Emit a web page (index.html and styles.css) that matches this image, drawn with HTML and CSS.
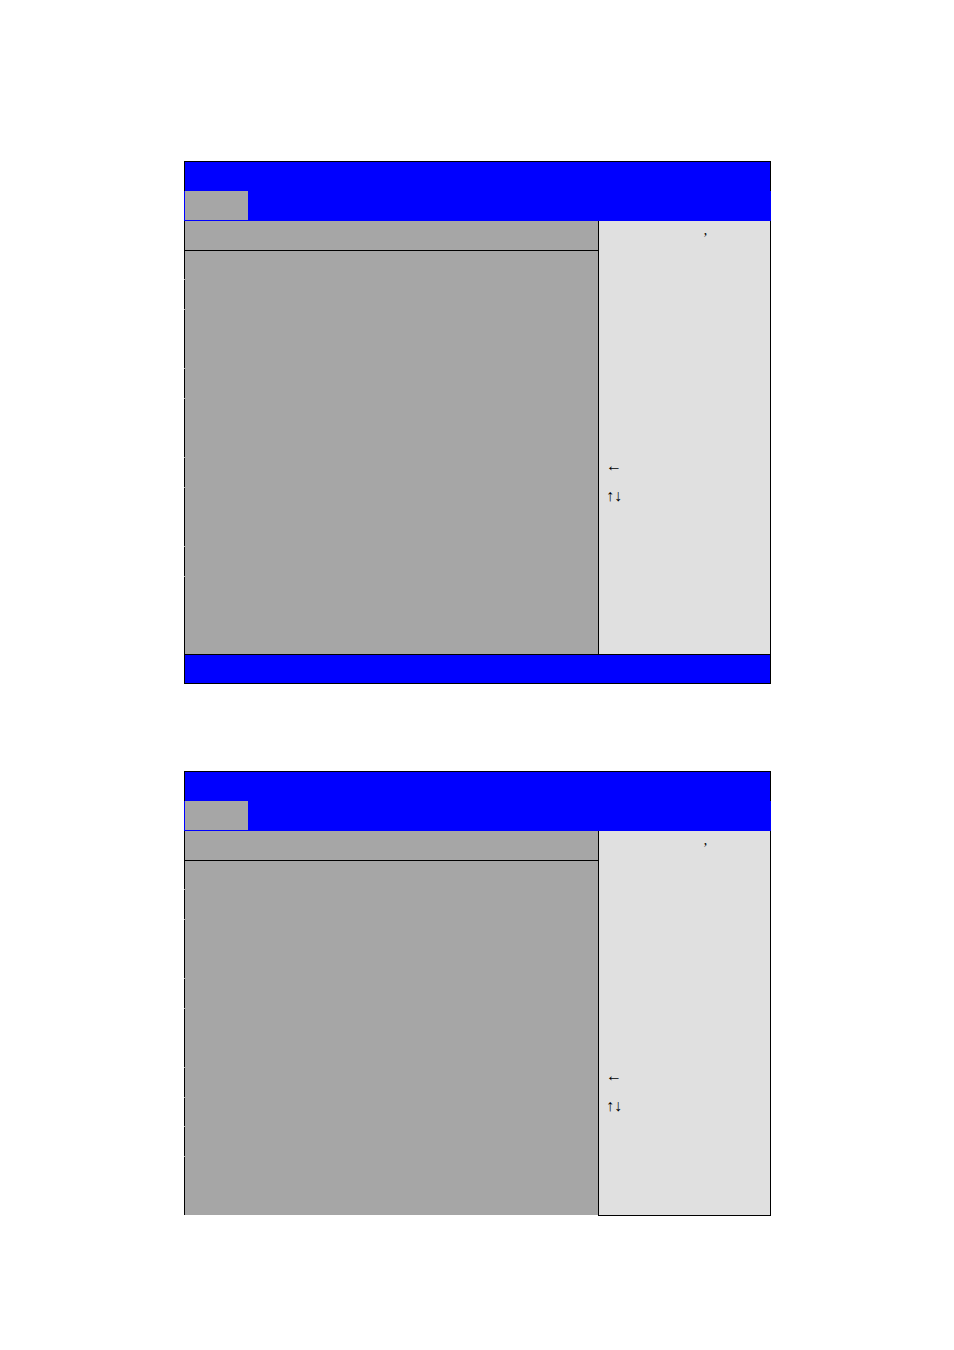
FILE: index.html
```html
<!DOCTYPE html>
<html lang="en">
<head>
<meta charset="utf-8">
<title>BIOS Setup</title>
<link rel="stylesheet" href="styles.css">
</head>
<body>
<main class="page">
  <section class="screen">
    <header class="title-bar"></header>
    <nav class="tab-bar"><button class="tab" type="button" aria-label="Main"></button></nav>
    <div class="content">
      <div class="settings">
        <div class="heading"></div>
        <div class="row first"></div>
        <div class="row"></div>
        <div class="row double"></div>
        <div class="row"></div>
        <div class="row double"></div>
        <div class="row"></div>
        <div class="row double"></div>
        <div class="row"></div>
        <div class="row last-tall"></div>
      </div>
      <aside class="help">
        <p class="hint">’</p>
        <p class="key">←</p>
        <p class="key">↑↓</p>
      </aside>
    </div>
    <footer class="footer-bar"></footer>
  </section>
  <section class="screen">
    <header class="title-bar"></header>
    <nav class="tab-bar"><button class="tab" type="button" aria-label="Main"></button></nav>
    <div class="content">
      <div class="settings">
        <div class="heading"></div>
        <div class="row first"></div>
        <div class="row"></div>
        <div class="row double"></div>
        <div class="row"></div>
        <div class="row double"></div>
        <div class="row"></div>
        <div class="row first"></div>
        <div class="row"></div>
        <div class="row last"></div>
      </div>
      <aside class="help closed">
        <p class="hint">’</p>
        <p class="key">←</p>
        <p class="key">↑↓</p>
      </aside>
    </div>
  </section>
</main>
</body>
</html>
```
FILE: styles.css
```css
* {
  box-sizing: border-box;
}

body {
  margin: 0;
  background: #fff;
  color: #000;
  font: 16px/30px "Liberation Serif", serif;
}

.page {
  display: flex;
  flex-direction: column;
  gap: 87px;
  padding: 161px 183px 134px 184px;
}

.title-bar {
  height: 30px;
  background: #00f;
  border: 1px solid #000;
  border-bottom: 0;
}

.tab-bar {
  display: flex;
  height: 30px;
  padding: 0 0 1px 1px;
  background: #00f;
}

.tab {
  width: 63px;
  padding: 0;
  border: 0;
  background: #a6a6a6;
}

.content {
  display: grid;
  grid-template-columns: 1fr 173px;
}

.settings {
  background: #a6a6a6;
}

.heading {
  height: 30px;
  border-left: 1px solid #000;
  border-bottom: 1px solid #000;
}

.row {
  height: 29px;
  margin-bottom: 1px;
  border-left: 1px solid #000;
}

.row.first {
  height: 28px;
}

.row.double {
  height: 58px;
}

.row.last {
  height: 58px;
  margin-bottom: 0;
}

.row.last-tall {
  height: 77px;
  margin-bottom: 0;
}

.help {
  padding: 3px 0 0 7px;
  background: #e0e0e0;
  border-left: 1px solid #000;
  border-right: 1px solid #000;
}

.help.closed {
  margin-bottom: -1px;
  border-bottom: 1px solid #000;
}

.hint {
  margin: 0 0 197px;
  padding-left: 97px;
  font-size: 14px;
}

.key {
  margin: 0;
}

.footer-bar {
  height: 30px;
  background: #00f;
  border: 1px solid #000;
}
```
